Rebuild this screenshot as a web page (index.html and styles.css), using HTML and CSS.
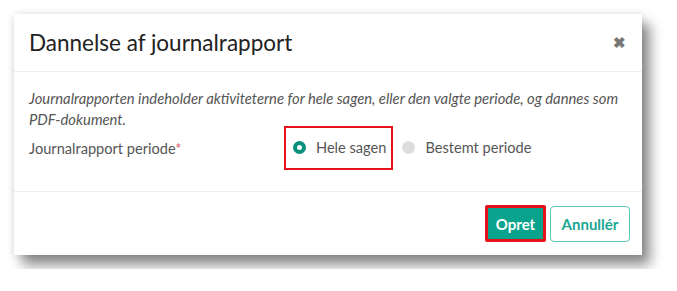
FILE: index.html
```html
<!DOCTYPE html>
<html lang="da">
<head>
    <meta charset="UTF-8">
    <title>Dannelse af journalrapport</title>
    <link rel="stylesheet" href="styles.css">
</head>
<body>
    <div class="modal">
        <div class="modal-header">
            <h3>Dannelse af journalrapport</h3>
            <span class="close">&#10006;</span>
        </div>
        <div class="modal-body">
            <p class="info">Journalrapporten indeholder aktiviteterne for hele sagen, eller den valgte periode, og dannes som PDF-dokument.</p>
            <div class="field">
                <span class="label">Journalrapport periode<span class="req">*</span></span>
                <div class="options">
                    <label class="radio marked"><span class="dot checked"></span>Hele sagen</label>
                    <label class="radio"><span class="dot"></span>Bestemt periode</label>
                </div>
            </div>
        </div>
        <div class="modal-footer">
            <button class="btn primary">Opret</button>
            <button class="btn secondary">Annullér</button>
        </div>
    </div>
</body>
</html>
```

FILE: styles.css
```css
body {
    margin: 0;
    padding: 14px;
    background: white;
    font-family: Lato, "Noto Sans", sans-serif;
    color: #555;
}
.modal {
    width: 628px;
    height: 241px;
    background: white;
    box-shadow: 0 0 8px rgba(0, 0, 0, 0.12), 8px 10px 12px rgba(0, 0, 0, 0.45);
    display: flex;
    flex-direction: column;
}
.modal-header {
    height: 57px;
    border-bottom: 1px solid #eee;
    display: flex;
    align-items: center;
    justify-content: space-between;
    padding: 0 16px 0 15px;
}
.modal-header h3 {
    margin: 0;
    font-size: 22.5px;
    font-weight: normal;
    color: #222;
}
.close {
    color: #777;
    font-size: 15px;
    font-weight: bold;
}
.modal-body {
    height: 119px;
    border-bottom: 1px solid #eee;
    padding: 0 15px;
}
.info {
    margin: 16px 0 0;
    font-style: italic;
    font-size: 14.8px;
    line-height: 21px;
}
.field {
    display: grid;
    grid-template-columns: 255px 1fr;
    align-items: center;
    margin-top: -4px;
}
.label {
    font-size: 14.6px;
}
.req {
    color: #e05a6a;
}
.options {
    display: flex;
    align-items: center;
}
.radio {
    display: flex;
    align-items: center;
    gap: 10px;
    font-size: 14.6px;
    padding: 11px 5px 12px 7px;
    border: 2px solid transparent;
}
.radio.marked {
    border-color: #e8101a;
}
.dot {
    width: 13px;
    height: 13px;
    border-radius: 50%;
    background: #ddd;
    box-sizing: border-box;
}
.dot.checked {
    background: white;
    border: 4px solid #07907c;
}
.modal-footer {
    flex: 1;
    display: flex;
    justify-content: flex-end;
    align-items: center;
    gap: 4px;
    padding: 0 12px;
}
.btn {
    height: 37px;
    font-family: Lato, "Noto Sans", sans-serif;
    font-size: 15px;
    font-weight: bold;
    border-radius: 4px;
    cursor: pointer;
}
.primary {
    width: 61px;
    background: #0aa38d;
    color: white;
    border: 3px solid #e8101a;
    border-radius: 2px;
}
.secondary {
    width: 80px;
    height: 36px;
    background: white;
    color: #20a894;
    border: 1px solid #5cc6b8;
}
```
